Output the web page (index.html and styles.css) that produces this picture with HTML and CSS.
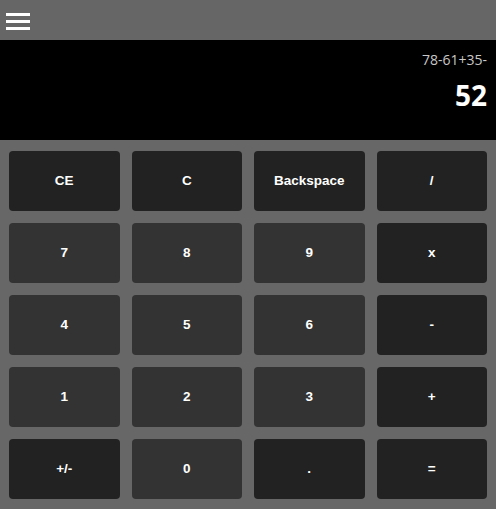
FILE: index.html
```html
<!DOCTYPE html>
<html>
<head>
<meta charset="utf-8">
<link rel="stylesheet" href="styles.css">
</head>
<body>
<header class="topbar">
  <div class="menu"><span></span><span></span><span></span></div>
</header>
<section class="display">
  <div class="expr">78-61+35-</div>
  <div class="result">52</div>
</section>
<section class="keys">
  <button class="key op">CE</button>
  <button class="key op">C</button>
  <button class="key op">Backspace</button>
  <button class="key op">/</button>
  <button class="key num">7</button>
  <button class="key num">8</button>
  <button class="key num">9</button>
  <button class="key op">x</button>
  <button class="key num">4</button>
  <button class="key num">5</button>
  <button class="key num">6</button>
  <button class="key op">-</button>
  <button class="key num">1</button>
  <button class="key num">2</button>
  <button class="key num">3</button>
  <button class="key op">+</button>
  <button class="key op">+/-</button>
  <button class="key num">0</button>
  <button class="key op">.</button>
  <button class="key op">=</button>
</section>
</body>
</html>
```
FILE: styles.css
```css
html, body {
  margin: 0;
  padding: 0;
  background: #676767;
  width: 496px;
  height: 509px;
  overflow: hidden;
}
.topbar {
  height: 40px;
  background: #666666;
  display: flex;
  align-items: flex-start;
}
.menu {
  margin: 13px 0 0 6px;
  display: flex;
  flex-direction: column;
  gap: 4px;
}
.menu span {
  display: block;
  width: 24px;
  height: 3px;
  background: #ffffff;
}
.display {
  height: 100px;
  background: #000000;
  box-sizing: border-box;
  padding: 10px 9px 0 0;
  text-align: right;
  font-family: "Open Sans", "Noto Sans", sans-serif;
}
.expr {
  color: #c8c8c8;
  font-size: 14px;
  line-height: 20px;
}
.result {
  color: #ffffff;
  font-size: 28px;
  font-weight: bold;
  line-height: 38px;
  margin-top: 6px;
}
.keys {
  display: grid;
  grid-template-columns: repeat(4, 1fr);
  grid-auto-rows: 72px;
  padding: 5px 3px 4px;
  background: #676767;
}
.key {
  margin: 6px;
  border: none;
  border-radius: 4px;
  color: #ffffff;
  font-family: "Liberation Sans", Arial, sans-serif;
  font-weight: bold;
  font-size: 13.5px;
  padding: 0 0 2px;
}
.op { background: #222222; }
.num { background: #333333; }
```
